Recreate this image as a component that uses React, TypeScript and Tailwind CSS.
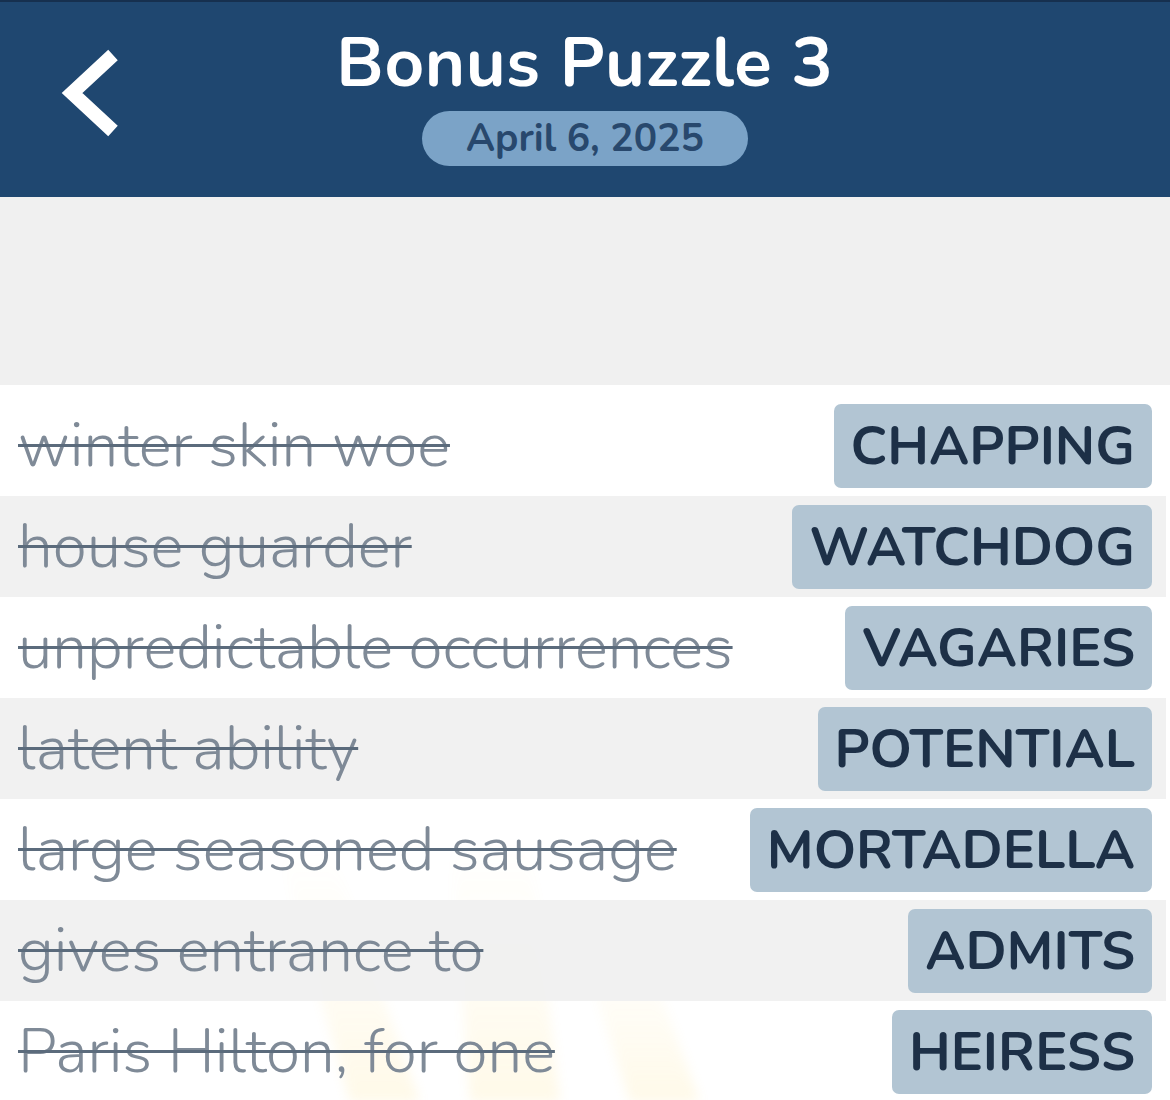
import React from "react";

const clues = [
  { clue: "winter skin woe", answer: "CHAPPING" },
  { clue: "house guarder", answer: "WATCHDOG" },
  { clue: "unpredictable occurrences", answer: "VAGARIES" },
  { clue: "latent ability", answer: "POTENTIAL" },
  { clue: "large seasoned sausage", answer: "MORTADELLA" },
  { clue: "gives entrance to", answer: "ADMITS" },
  { clue: "Paris Hilton, for one", answer: "HEIRESS" },
];

const font = { fontFamily: "Nunito, Lato, 'Noto Sans', sans-serif" };

function Header() {
  return (
    <header className="relative h-[197px] bg-[#1f4770] border-t-2 border-[#16304f] flex flex-col items-center">
      <button className="absolute left-[50px] top-[40px] w-[80px] h-[110px]" aria-label="Back">
        <svg width="80" height="110" viewBox="0 0 80 110">
          <polyline points="63,13 22,51 63,89" fill="none" stroke="white" strokeWidth="14" strokeLinejoin="miter" />
        </svg>
      </button>
      <h1 className="mt-[22px] text-[69px] leading-[78px] font-bold text-white tracking-[0.6px]">Bonus Puzzle 3</h1>
      <div className="mt-[9px] w-[326px] h-[55px] rounded-full bg-[#7ba3c7] flex items-center justify-center">
        <span className="text-[39px] font-bold text-[#28486d] leading-none">April 6, 2025</span>
      </div>
    </header>
  );
}

function Rays() {
  return (
    <svg className="absolute inset-0 w-full h-full pointer-events-none" viewBox="0 0 1170 715" preserveAspectRatio="none">
      <defs>
        <linearGradient id="fade" x1="0" y1="0" x2="0" y2="1">
          <stop offset="0" stopColor="#ffd24a" stopOpacity="0" />
          <stop offset="0.65" stopColor="#ffd24a" stopOpacity="0.6" />
          <stop offset="1" stopColor="#ffd24a" stopOpacity="1" />
        </linearGradient>
        <filter id="soft">
          <feGaussianBlur stdDeviation="6" />
        </filter>
      </defs>
      <g fill="url(#fade)" opacity="0.12" filter="url(#soft)">
        <polygon points="280,470 330,460 420,715 350,715" />
        <polygon points="450,450 530,450 560,715 470,715" />
        <polygon points="580,560 640,550 700,715 630,715" />
      </g>
    </svg>
  );
}

function ClueRow({ clue, answer, shaded }: { clue: string; answer: string; shaded: boolean }) {
  return (
    <div
      className={`relative h-[101px] mr-[4px] pl-[18px] pr-[14px] flex items-center justify-between ${
        shaded ? "bg-[#f0f0f0]/90" : "bg-white/0"
      }`}
    >
      <span className="text-[62px] font-light text-[#7f8a97] line-through decoration-[#5b6b7c] decoration-[3px] whitespace-nowrap leading-none">
        {clue}
      </span>
      <span className="h-[84px] px-[17px] rounded-[7px] bg-[#b2c5d3] flex items-center text-[54px] font-bold text-[#1d3047] leading-none">
        {answer}
      </span>
    </div>
  );
}

export default function App() {
  return (
    <div className="w-[1170px] h-[1100px] overflow-hidden bg-white" style={font}>
      <Header />
      <div className="h-[188px] bg-[#f0f0f0]" />
      <div className="relative bg-white pt-[10px]">
        <Rays />
        {clues.map((c, i) => (
          <ClueRow key={c.answer} clue={c.clue} answer={c.answer} shaded={i % 2 === 1} />
        ))}
      </div>
    </div>
  );
}
